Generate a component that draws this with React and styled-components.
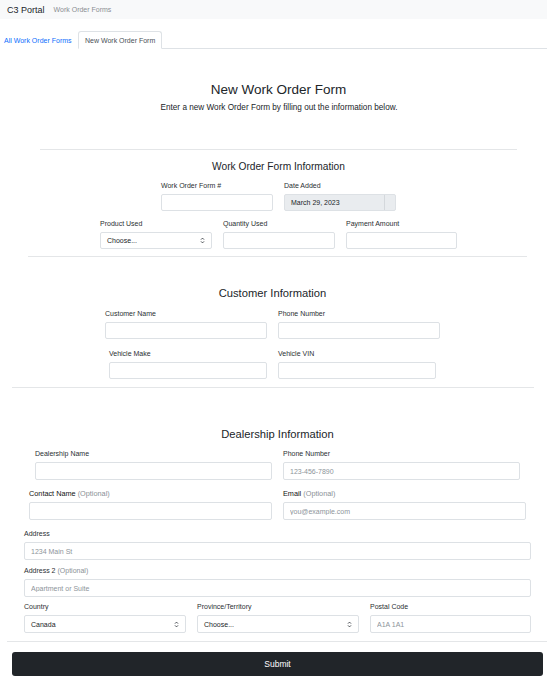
import React from 'react';
import styled, { createGlobalStyle } from 'styled-components';

const GlobalStyle = createGlobalStyle`
* { box-sizing: border-box; }
body {
  margin: 0;
  background: #fff;
  color: #212529;
  font-family: "Liberation Sans", Arial, sans-serif;
}
`;

const Navbar = styled.nav`
height: 19px;
background: #f8f9fa;
display: flex;
align-items: center;
padding-left: 7px;
`;

const Brand = styled.span`
font-size: 9px;
color: #212529;
`;

const NavLink = styled.span`
font-size: 7px;
color: #8a8e93;
margin-left: 9px;
`;

const Tabs = styled.div`
margin-top: 12px;
height: 18px;
display: flex;
border-bottom: 1px solid #dee2e6;
`;

const Tab = styled.div`
width: ${p => p.$w}px;
height: 18px;
margin-bottom: -1px;
display: flex;
align-items: center;
padding-left: ${p => (p.$active ? '6px' : '3px')};
font-size: 7px;
color: ${p => (p.$active ? '#495057' : '#0d6efd')};
background: #fff;
border: 1px solid ${p => (p.$active ? '#dee2e6' : 'transparent')};
border-bottom-color: ${p => (p.$active ? '#fff' : 'transparent')};
border-radius: 3px 3px 0 0;
`;

const Title = styled.h2`
margin: 32px 0 0 10px;
font-size: 13.5px;
line-height: 17px;
font-weight: 400;
text-align: center;
color: #212529;
`;

const Lead = styled.p`
margin: 5px 0 0 11px;
font-size: 8.2px;
line-height: 10px;
text-align: center;
color: #212529;
`;

const Rule = styled.hr`
border: 0;
height: 1px;
background: #e4e6e8;
margin: ${p => p.$top}px ${p => p.$right}px 0 ${p => p.$left}px;
`;

const SectionTitle = styled.h4`
margin: ${p => p.$top}px 0 0 ${p => p.$shift || 0}px;
font-size: ${p => p.$size || 11.2}px;
line-height: 12px;
font-weight: 400;
text-align: center;
color: #212529;
`;

const Row = styled.div`
display: flex;
gap: 11px;
margin-top: ${p => p.$top}px;
padding-left: ${p => p.$left}px;
`;

const Field = styled.div`
width: ${p => p.$w}px;
display: flex;
flex-direction: column;
`;

const Label = styled.label`
font-size: ${p => (p.$strong ? '7.3px' : '7px')};
line-height: 9px;
margin-bottom: 4px;
color: ${p => (p.$strong ? '#111' : '#2b2f33')};
white-space: nowrap;
`;

const Muted = styled.span`
color: #8a9096;
`;

const Input = styled.input`
height: ${p => p.$h || 18}px;
width: 100%;
border: 1px solid #dde1e5;
border-radius: 2px;
padding: 0 6px;
font-family: inherit;
font-size: 7px;
color: #212529;
background: #fff;
outline: none;
&::placeholder { color: #8d949a; }
`;

const Select = styled.div`
height: ${p => p.$h || 18}px;
border: 1px solid #dde1e5;
border-radius: 2px;
padding: 0 6px;
display: flex;
align-items: center;
justify-content: space-between;
font-size: 7px;
color: #212529;
`;

const DateBox = styled.div`
height: ${p => p.$h || 18}px;
display: flex;
border: 1px solid #dde1e5;
border-radius: 2px;
background: #e9ecef;
font-size: 7px;
color: #212529;
`;

const DateText = styled.div`
flex: 1;
display: flex;
align-items: center;
padding: 0 6px;
`;

const DateAddon = styled.div`
width: 11px;
border-left: 1px solid #d4d8dc;
`;

const SubmitButton = styled.button`
display: block;
margin: 10px 4px 0 12px;
width: 531px;
height: 24px;
border: 0;
border-radius: 3px;
background: #212529;
color: #fff;
font-family: inherit;
font-size: 8.5px;
`;

const Arrows = () => (
  <svg width="5" height="7" viewBox="0 0 5 7" fill="none" stroke="#343a40" strokeWidth="0.9">
    <path d="M1 2.6 L2.5 1.1 L4 2.6" />
    <path d="M1 4.4 L2.5 5.9 L4 4.4" />
  </svg>
);

function TextField({ w, h, label, optional, strong, placeholder }) {
  return (
    <Field $w={w}>
      <Label $strong={strong}>
        {label}
        {optional && <Muted> (Optional)</Muted>}
      </Label>
      <Input $h={h} placeholder={placeholder} />
    </Field>
  );
}

function SelectField({ w, h, label, value }) {
  return (
    <Field $w={w}>
      <Label>{label}</Label>
      <Select $h={h}>
        <span>{value}</span>
        <Arrows />
      </Select>
    </Field>
  );
}

export default function App() {
  return (
    <>
      <GlobalStyle />
      <Navbar>
        <Brand>C3 Portal</Brand>
        <NavLink>Work Order Forms</NavLink>
      </Navbar>
      <Tabs>
        <Tab $w={78}>All Work Order Forms</Tab>
        <Tab $w={84} $active>New Work Order Form</Tab>
      </Tabs>

      <Title>New Work Order Form</Title>
      <Lead>Enter a new Work Order Form by filling out the information below.</Lead>

      <Rule $top={36} $left={40} $right={30} />
      <SectionTitle $top={11} $shift={10} $size={10.2}>Work Order Form Information</SectionTitle>
      <Row $top={8} $left={161}>
        <TextField w={112} h={17} label="Work Order Form #" />
        <Field $w={112}>
          <Label>Date Added</Label>
          <DateBox $h={17}>
            <DateText>March 29, 2023</DateText>
            <DateAddon />
          </DateBox>
        </Field>
      </Row>
      <Row $top={8} $left={100}>
        <SelectField w={112} h={17} label="Product Used" value="Choose..." />
        <TextField w={112} h={17} label="Quantity Used" />
        <TextField w={111} h={17} label="Payment Amount" />
      </Row>

      <Rule $top={7} $left={28} $right={20} />
      <SectionTitle $top={30} $shift={-2}>Customer Information</SectionTitle>
      <Row $top={10} $left={105}>
        <TextField w={162} h={17} label="Customer Name" />
        <TextField w={162} h={17} label="Phone Number" />
      </Row>
      <Row $top={10} $left={109}>
        <TextField w={158} h={17} label="Vehicle Make" />
        <TextField w={158} h={17} label="Vehicle VIN" />
      </Row>

      <Rule $top={8} $left={12} $right={13} />
      <SectionTitle $top={40} $shift={8}>Dealership Information</SectionTitle>
      <Row $top={9} $left={35}>
        <TextField w={237} label="Dealership Name" />
        <TextField w={237} label="Phone Number" placeholder="123-456-7890" />
      </Row>
      <Row $top={9} $left={29}>
        <TextField w={243} label="Contact Name" optional strong />
        <TextField w={243} label="Email" optional strong placeholder="you@example.com" />
      </Row>
      <Row $top={9} $left={24}>
        <TextField w={507} label="Address" placeholder="1234 Main St" />
      </Row>
      <Row $top={6} $left={24}>
        <TextField w={507} label="Address 2" optional placeholder="Apartment or Suite" />
      </Row>
      <Row $top={5} $left={24}>
        <SelectField w={162} label="Country" value="Canada" />
        <SelectField w={162} label="Province/Territory" value="Choose..." />
        <TextField w={161} label="Postal Code" placeholder="A1A 1A1" />
      </Row>

      <Rule $top={8} $left={7} $right={0} />
      <SubmitButton type="button">Submit</SubmitButton>
    </>
  );
}
